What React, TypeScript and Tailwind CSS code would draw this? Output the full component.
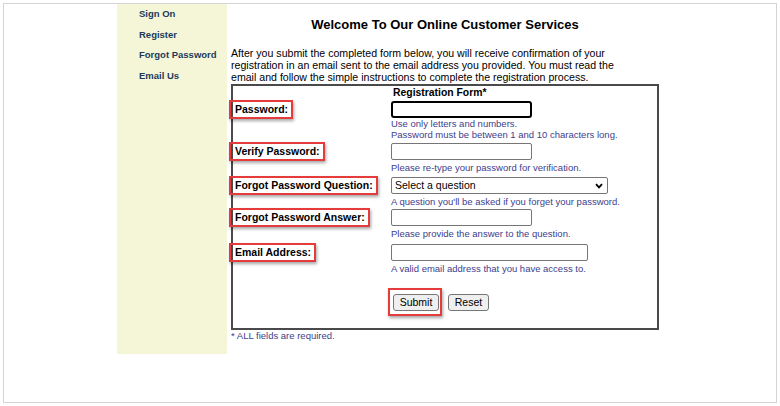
const hint = 'text-[9.5px] leading-[11px] text-[#40408c]';
const mark = 'block w-fit -mt-[1px] -ml-[4px] border-2 border-[#e53b3b] pl-[4px] pr-[3px] text-[10.5px] font-bold leading-[15px] text-black shadow-[1px_2px_3px_rgba(0,0,0,0.35)]';
const field = 'block h-[17px] rounded-[2px] border border-[#767676] bg-white px-[3px] text-[10.5px] outline-none';

function Row({ label, className, children }: { label: string; className?: string; children: React.ReactNode }) {
  return (
    <div className={`flex ${className ?? ''}`}>
      <div className="w-[158px] shrink-0">
        <span className={mark}>{label}</span>
      </div>
      <div>{children}</div>
    </div>
  );
}

export default function App() {
  return (
    <div className="h-[406px] w-[780px] bg-white p-[3px] font-['Liberation_Sans',Arial,sans-serif] text-black">
      <div className="flex h-full border border-[#d4d4d4]">
        <div className="w-[113px] shrink-0" />

        <nav className="flex h-[350px] w-[110px] shrink-0 flex-col bg-[#f5f5d7] pl-[22px] text-[9.5px] font-bold leading-[20.7px] text-[#1b3b5a]">
          <a href="#">Sign On</a>
          <a href="#">Register</a>
          <a href="#">Forgot Password</a>
          <a href="#">Email Us</a>
        </nav>

        <main className="w-[436px] shrink-0">
          <h1 className="pt-[13px] text-center text-[13px] font-bold leading-[16px]">
            Welcome To Our Online Customer Services
          </h1>
          <p className="mt-[14px] pl-[4px] text-[10.6px] leading-[12px]">
            After you submit the completed form below, you will receive confirmation of your
            <br />
            registration in an email sent to the email address you provided. You must read the
            <br />
            email and follow the simple instructions to complete the registration process.
          </p>

          <form className="ml-[4px] mt-[1px] w-[428px] border-2 border-[#4a4a4a] pb-[12px]" onSubmit={(e) => e.preventDefault()}>
            <div className="flex pt-[1px]">
              <div className="w-[158px] shrink-0" />
              <div className="pl-[2px] text-[10.4px] font-bold leading-[12px]">Registration Form*</div>
            </div>

            <Row label="Password:" className="mt-[2px]">
              <input type="password" className="block h-[17px] w-[141px] rounded-[3px] border-2 border-black bg-white px-[2px] text-[10.5px] outline-none" />
              <div className={hint}>
                Use only letters and numbers.
                <br />
                Password must be between 1 and 10 characters long.
              </div>
            </Row>

            <Row label="Verify Password:" className="mt-[3px]">
              <input type="password" className={`${field} w-[141px]`} />
              <div className={`mt-[2px] ${hint}`}>Please re-type your password for verification.</div>
            </Row>

            <Row label="Forgot Password Question:" className="mt-[4px]">
              <div className="relative w-[217px]">
                <select className={`${field} w-[217px] appearance-none`} defaultValue="">
                  <option value="">Select a question</option>
                  <option>What is your pet's name?</option>
                  <option>What city were you born in?</option>
                </select>
                <svg className="pointer-events-none absolute right-[5px] top-[6px]" width="8" height="6" viewBox="0 0 8 6">
                  <path d="M1 1.2 4 4.4 7 1.2" fill="none" stroke="#000" strokeWidth="1.8" />
                </svg>
              </div>
              <div className={`mt-[2px] ${hint}`}>A question you'll be asked if you forget your password.</div>
            </Row>

            <Row label="Forgot Password Answer:" className="mt-[2px]">
              <input type="text" className={`${field} w-[141px]`} />
              <div className={`mt-[2px] ${hint}`}>Please provide the answer to the question.</div>
            </Row>

            <Row label="Email Address:" className="mt-[5px]">
              <input type="email" className={`${field} w-[197px]`} />
              <div className={`mt-[2px] ${hint}`}>A valid email address that you have access to.</div>
            </Row>

            <div className="mt-[14px] flex items-start">
              <div className="w-[158px] shrink-0" />
              <div className="-ml-[3px] border-2 border-[#e53b3b] pb-[3px] pl-[3px] pr-[1px] pt-[4px] shadow-[1px_2px_3px_rgba(0,0,0,0.35)]">
                <button type="submit" className="block h-[17px] w-[46px] rounded-[3px] border border-[#767676] bg-[#efefef] text-[10.5px] leading-[15px]">
                  Submit
                </button>
              </div>
              <button type="reset" className="ml-[6px] mt-[6px] h-[17px] w-[41px] rounded-[3px] border border-[#767676] bg-[#efefef] text-[10.5px] leading-[15px]">
                Reset
              </button>
            </div>
          </form>

          <div className={`pl-[4px] ${hint}`}>* ALL fields are required.</div>
        </main>
      </div>
    </div>
  );
}
